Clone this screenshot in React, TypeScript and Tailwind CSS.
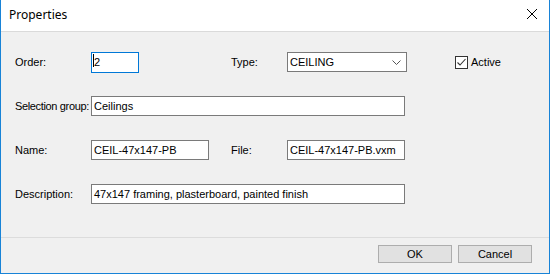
import React from "react";

const font = { fontFamily: '"Liberation Sans", Arial, sans-serif' };

function Label({ children, w, extra = "" }: { children: React.ReactNode; w: string; extra?: string }) {
  return <div className={`${w} ${extra} shrink-0 text-[11px] leading-none text-black whitespace-nowrap`}>{children}</div>;
}

function Input({ value, w }: { value: string; w: string }) {
  return (
    <div className={`${w} h-[20px] shrink-0 bg-white border border-[#7a7a7a] flex items-center pl-[2px] text-[11px] text-black whitespace-nowrap overflow-hidden`}>
      {value}
    </div>
  );
}

export default function App() {
  return (
    <div style={font} className="w-[550px] h-[274px] flex flex-col bg-[#f0f0f0] border-l border-r border-b border-[#1883d7] overflow-hidden">
      {/* Title bar */}
      <div className="h-[32px] shrink-0 bg-white border-b border-[#dadada] flex items-center justify-between pl-[8px] pr-[10px]">
        <span className="text-[12px] text-black pb-[2px]" style={{ fontFamily: '"Noto Sans", "Open Sans", sans-serif' }}>Properties</span>
        <svg width="12" height="12" viewBox="0 0 12 12" className="mb-[3px] mr-[1px]">
          <path d="M1 1 L11 11 M11 1 L1 11" stroke="#000" strokeWidth="1" fill="none" />
        </svg>
      </div>

      {/* Content */}
      <div className="flex flex-col pl-[14px]">
        {/* Row 1 */}
        <div className="flex items-center h-[20px] mt-[20px]">
          <Label w="w-[76px]">Order:</Label>
          <div className="w-[48px] h-[21px] shrink-0 bg-white border border-[#0078d7] flex items-center pl-[2px] text-[11px] text-black">
            <span className="relative">
              <span className="absolute left-[-1px] top-[0px] w-[1px] h-[13px] bg-black" />
              2
            </span>
          </div>
          <div className="w-[92px] shrink-0" />
          <Label w="w-[56px]">Type:</Label>
          <div className="w-[120px] h-[20px] shrink-0 bg-white border border-[#7a7a7a] flex items-center justify-between pl-[2px] pr-[5px] text-[11px] text-black">
            <span>CEILING</span>
            <svg width="9" height="5" viewBox="0 0 9 5">
              <path d="M0.5 0.5 L4.5 4.5 L8.5 0.5" stroke="#555" strokeWidth="1" fill="none" />
            </svg>
          </div>
          <div className="w-[48px] shrink-0" />
          <div className="flex items-center">
            <div className="w-[13px] h-[13px] border border-[#333] bg-white flex items-center justify-center">
              <svg width="11" height="11" viewBox="0 0 11 11">
                <path d="M1.5 5.5 L4 8 L9.5 2" stroke="#333" strokeWidth="1.1" fill="none" />
              </svg>
            </div>
            <span className="ml-[3px] text-[11px] text-black">Active</span>
          </div>
        </div>

        {/* Row 2 */}
        <div className="flex items-center h-[20px] mt-[24px]">
          <Label w="w-[76px]" extra="tracking-[-0.35px]">Selection group:</Label>
          <Input value="Ceilings" w="w-[314px]" />
        </div>

        {/* Row 3 */}
        <div className="flex items-center h-[20px] mt-[24px]">
          <Label w="w-[76px]">Name:</Label>
          <Input value="CEIL-47x147-PB" w="w-[118px]" />
          <div className="w-[22px] shrink-0" />
          <Label w="w-[56px]">File:</Label>
          <Input value="CEIL-47x147-PB.vxm" w="w-[118px]" />
        </div>

        {/* Row 4 */}
        <div className="flex items-center h-[20px] mt-[24px]">
          <Label w="w-[76px]">Description:</Label>
          <Input value="47x147 framing, plasterboard, painted finish" w="w-[314px]" />
        </div>
      </div>

      {/* Separator */}
      <div className="mt-[33px] h-[1px] bg-[#dcdcdc] shrink-0" />

      {/* Footer */}
      <div className="flex justify-end gap-[6px] pr-[17px] mt-[7px]">
        <button className="w-[74px] h-[18px] bg-[#e1e1e1] border border-[#adadad] text-[11px] text-black leading-none">OK</button>
        <button className="w-[74px] h-[18px] bg-[#e1e1e1] border border-[#adadad] text-[11px] text-black leading-none">Cancel</button>
      </div>
    </div>
  );
}
